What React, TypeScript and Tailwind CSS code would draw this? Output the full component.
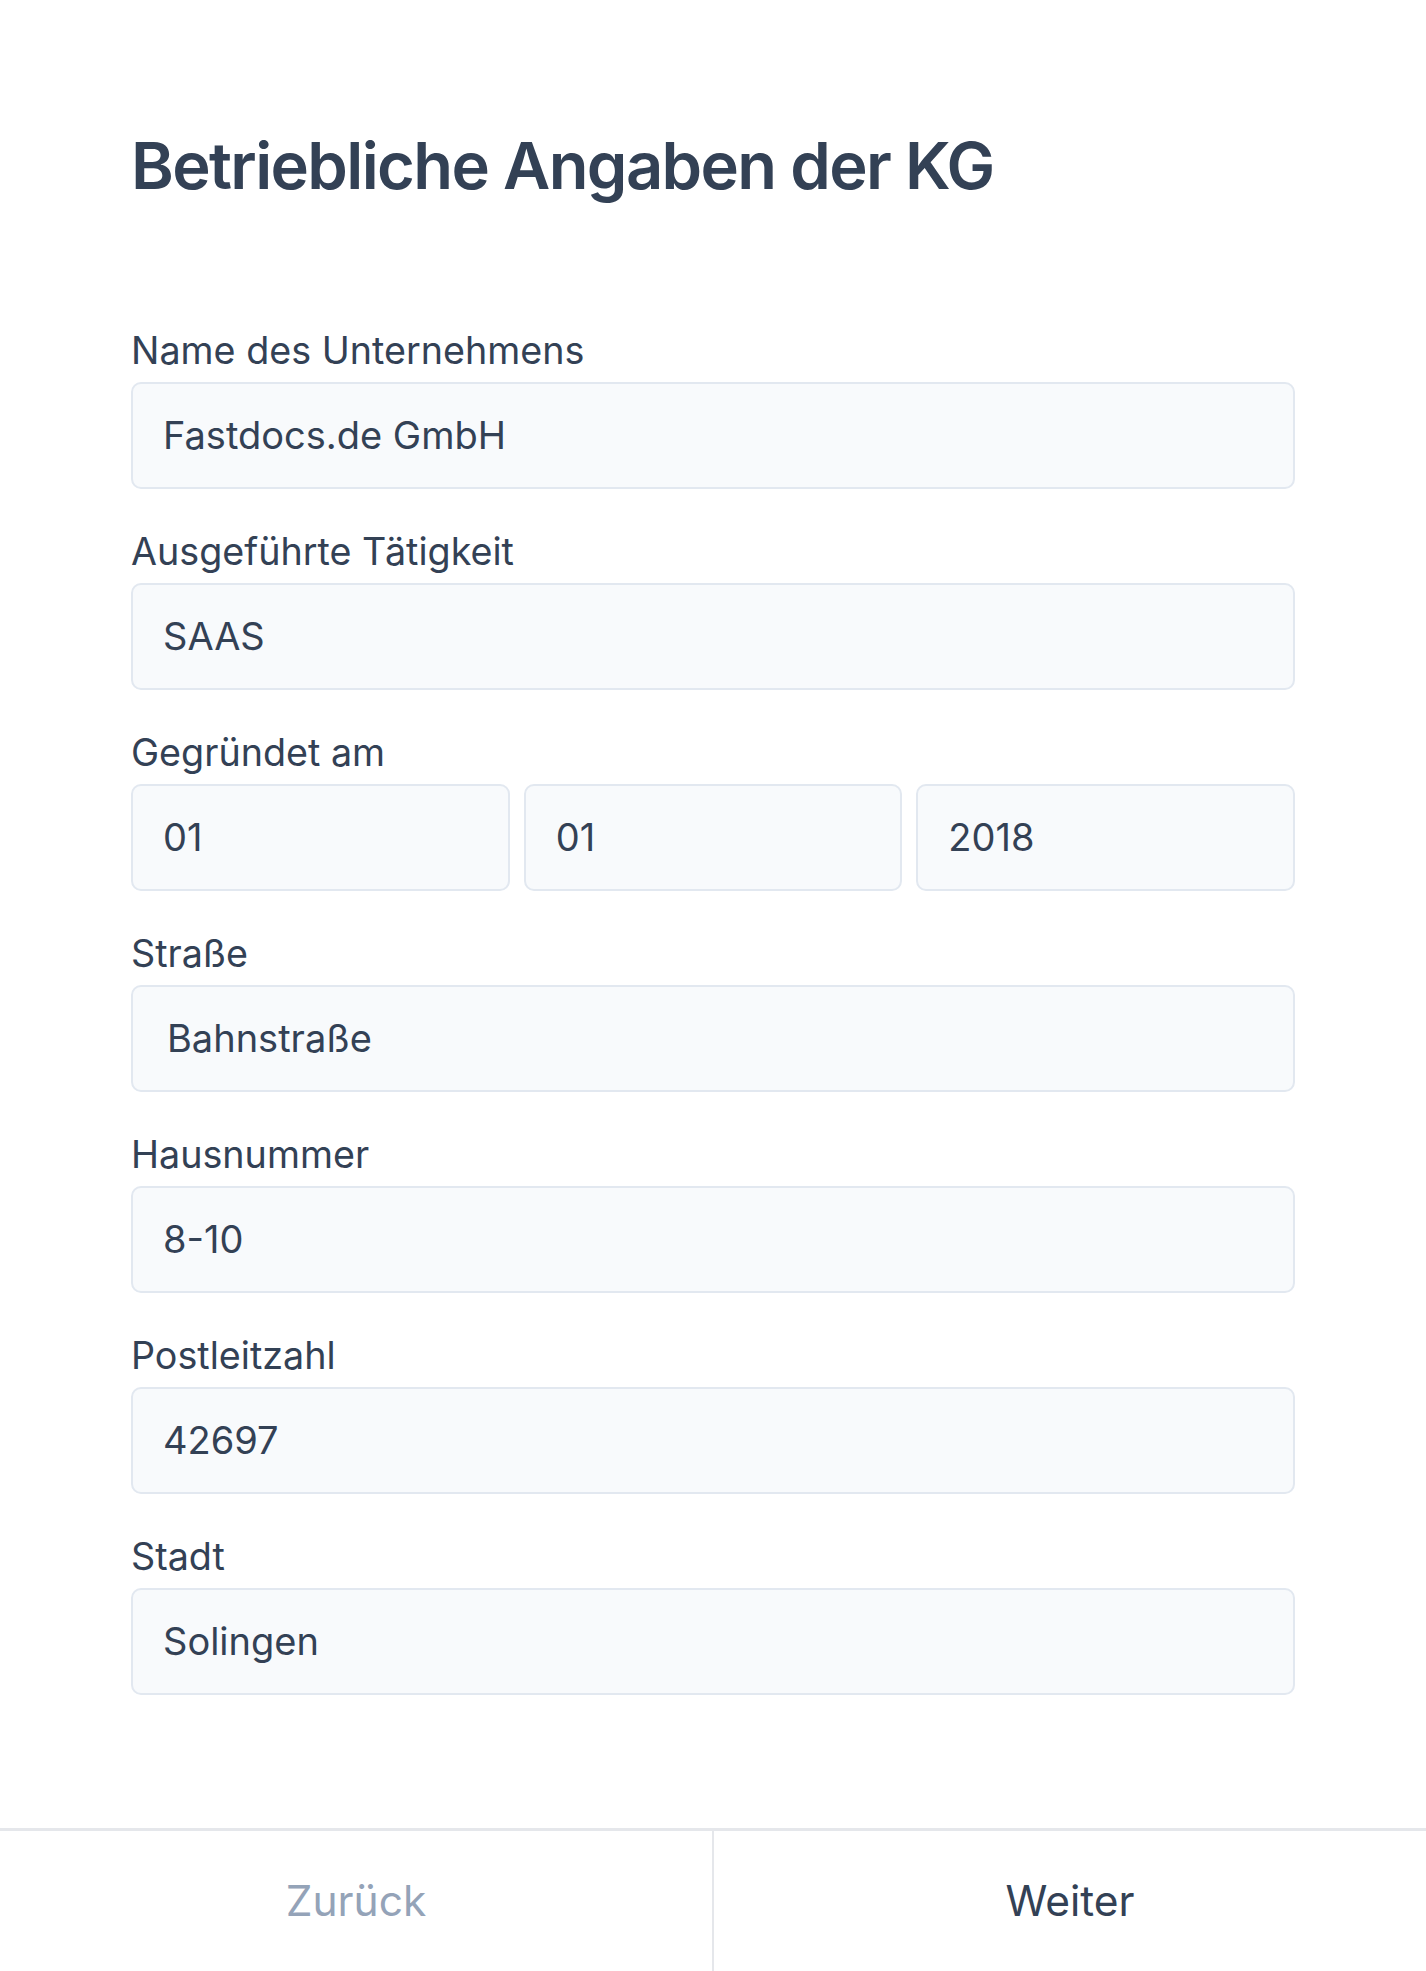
import React from 'react';

const Field: React.FC<{ label: string; value: string; indent?: boolean }> = ({ label, value, indent }) => (
  <div>
    <p className="text-[37.7px] leading-[56px] text-[#334155] mb-[4px]">{label}</p>
    <div
      className={`h-[107px] flex items-center rounded-[10px] border-2 border-[#e2e8f0] bg-[#f8fafc] text-[38px] text-[#334155] ${
        indent ? 'pl-[34px]' : 'pl-[30px]'
      }`}
    >
      {value}
    </div>
  </div>
);

const DateBox: React.FC<{ value: string }> = ({ value }) => (
  <div className="h-[107px] flex items-center rounded-[10px] border-2 border-[#e2e8f0] bg-[#f8fafc] pl-[30px] text-[38px] text-[#334155]">
    {value}
  </div>
);

export default function App() {
  return (
    <div
      className="min-h-screen flex flex-col bg-white"
      style={{ fontFamily: 'Inter, "Noto Sans", sans-serif' }}
    >
      <main className="flex-1 px-[131px] pt-[126px]">
        <h1 className="text-[65px] leading-[80px] font-semibold tracking-tight text-[#334155]">
          Betriebliche Angaben der KG
        </h1>

        <div className="mt-[116px] flex flex-col gap-[34px]">
          <Field label="Name des Unternehmens" value="Fastdocs.de GmbH" />
          <Field label="Ausgeführte Tätigkeit" value="SAAS" />
          <div>
            <p className="text-[37.7px] leading-[56px] text-[#334155] mb-[4px]">Gegründet am</p>
            <div className="grid grid-cols-3 gap-[14px]">
              <DateBox value="01" />
              <DateBox value="01" />
              <DateBox value="2018" />
            </div>
          </div>
          <Field label="Straße" value="Bahnstraße" indent />
          <Field label="Hausnummer" value="8-10" />
          <Field label="Postleitzahl" value="42697" />
          <Field label="Stadt" value="Solingen" />
        </div>
      </main>

      <footer className="h-[143px] flex border-t-[3px] border-[#e5e7eb]">
        <button className="flex-1 flex items-center justify-center text-[42.5px] text-[#94a3b8] border-r-2 border-[#e5e7eb]">
          Zurück
        </button>
        <button className="flex-1 flex items-center justify-center text-[42.5px] text-[#334155]">
          Weiter
        </button>
      </footer>
    </div>
  );
}
